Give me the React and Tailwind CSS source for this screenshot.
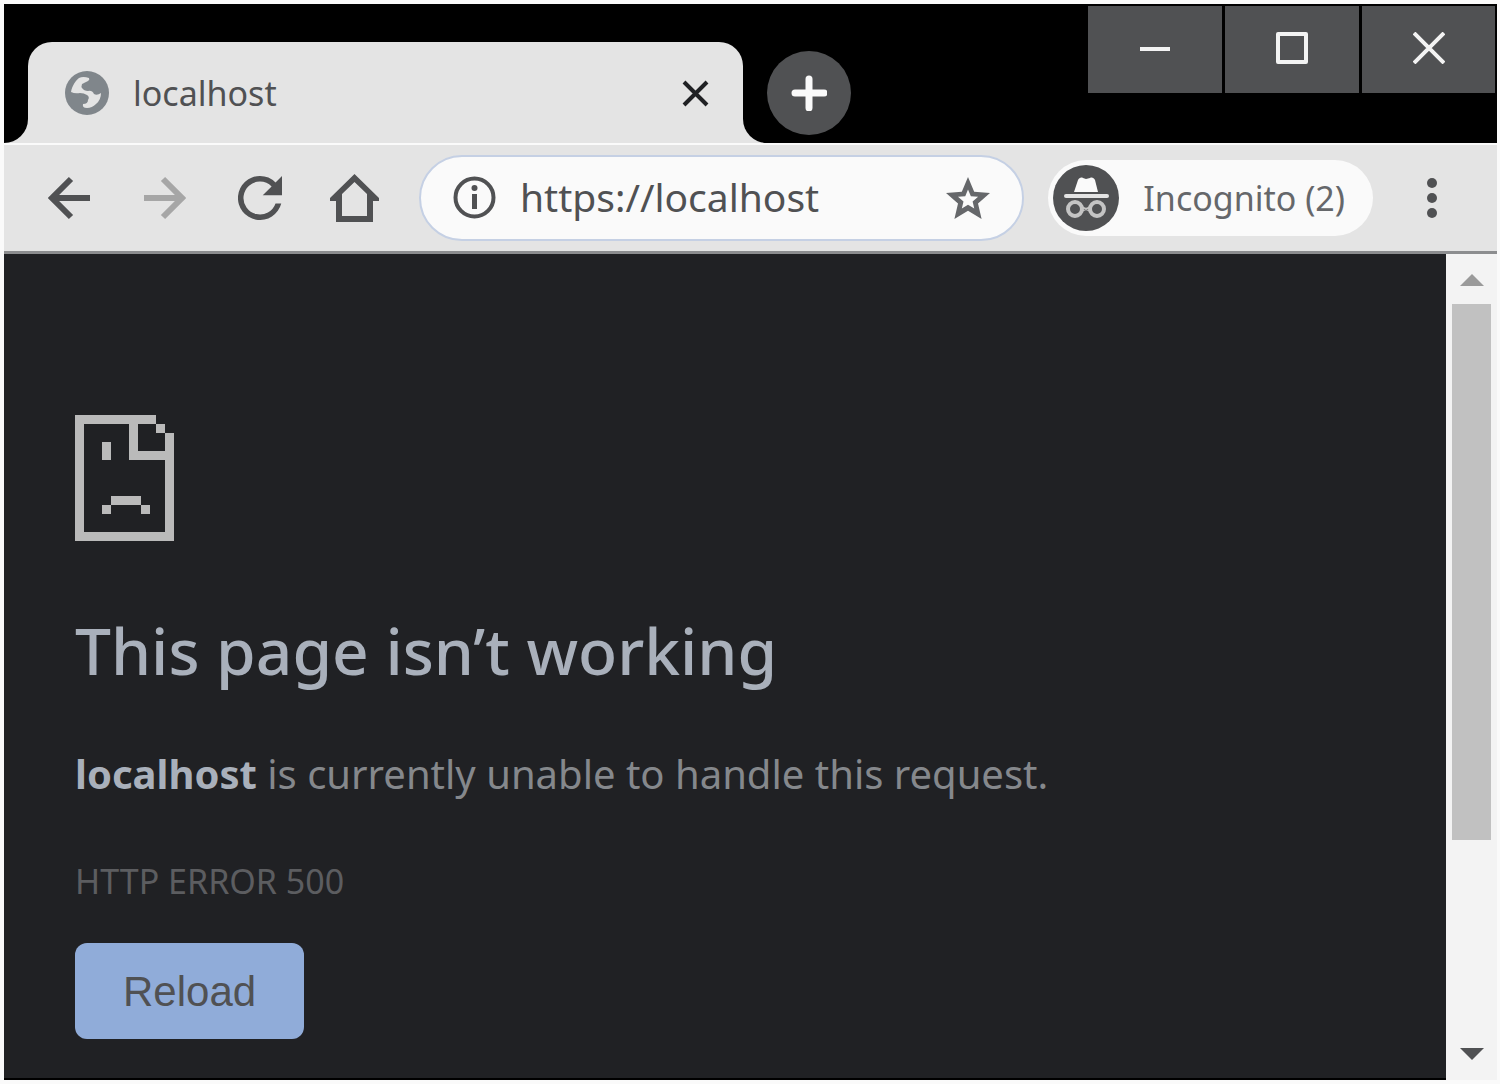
function GlobeIcon() {
  return (
    <svg className="size-11 shrink-0" viewBox="0 0 44 44" aria-hidden="true">
      <circle cx="22" cy="22" r="22" fill="#80868b" />
      <path
        d="M6 21C7 15 11 9 14 7q4-2 10 0 1 2-1 3l-6 3q-1 3 0 4 2 3 6 3 4-1 6 3 3 2 7-1 0 7-5 11-4 4-9 4-5 0-4-4 5 0 5-4 2-3-1-5-3-2-7-2-5 1-9-1z"
        fill="#e4e4e4"
      />
    </svg>
  );
}

function IncognitoIcon() {
  return (
    <svg className="size-[66px] shrink-0" viewBox="0 0 66 66" aria-hidden="true">
      <circle cx="33" cy="33" r="33" fill="#505153" />
      <path d="M21 27l4-12c1-2 3-3 5-2l3 1 4-1c2-1 4 0 5 2l3 12z" fill="#fafafa" />
      <path d="M13 31h41" stroke="#e4e4e4" strokeWidth="4" strokeLinecap="round" />
      <g fill="none" stroke="#c4c4c4" strokeWidth="4">
        <circle cx="22" cy="44" r="7" />
        <circle cx="44" cy="44" r="7" />
        <path d="M28 42l5 2 5-2M28 46l5-2 5 2" strokeWidth="2" />
      </g>
    </svg>
  );
}

function SadPageIcon() {
  return (
    <svg className="h-[126px] w-[99px]" viewBox="0 0 99 126" fill="#bababa" role="img" aria-label="Page error">
      <path d="M0 0h81v9H63v27h27V18h9v108H0zM9 9v108h81V45H54V9z" fillRule="evenodd" />
      <path d="M81 9h9v9h-9zM27 27h9v18h-9zM36 81h30v9H36zM27 90h9v9h-9zM66 90h9v9h-9z" />
    </svg>
  );
}

function TitleBar() {
  return (
    <header className="flex h-[139px] items-start bg-black">
      <div className="flex h-full shrink-0 items-end">
        <div className="size-6 bg-[#e4e4e4]">
          <div className="size-full rounded-br-3xl bg-black" />
        </div>
        <div className="flex h-[101px] w-[715px] items-center rounded-t-3xl bg-[#e4e4e4] pr-8 pl-[37px]">
          <GlobeIcon />
          <span className="ml-6 flex-1 text-[34px] leading-10 text-[#505153]">localhost</span>
          <button aria-label="Close tab" className="text-[#202124]">
            <svg className="size-8" viewBox="0 0 32 32" fill="none" stroke="currentColor" strokeWidth="4">
              <path d="M5 5l23 23M28 5L5 28" />
            </svg>
          </button>
        </div>
        <div className="size-6 bg-[#e4e4e4]">
          <div className="size-full rounded-bl-3xl bg-black" />
        </div>
      </div>
      <button
        aria-label="New tab"
        className="mt-[47px] flex size-[84px] shrink-0 items-center justify-center rounded-full bg-[#505153] text-[#fafafa]"
      >
        <svg className="size-9" viewBox="0 0 36 36" fill="none" stroke="currentColor" strokeWidth="7" strokeLinecap="round">
          <path d="M18 4v29M4 18h29" />
        </svg>
      </button>
      <div className="ml-auto flex shrink-0 gap-[3px] pt-[2px] pr-[2px] text-[#f3f3f3]">
        <button aria-label="Minimize" className="flex h-[87px] w-[134px] items-center justify-center bg-[#505153] pb-1">
          <svg className="size-8" viewBox="0 0 32 32" fill="none" stroke="currentColor" strokeWidth="4">
            <path d="M1 17h30" />
          </svg>
        </button>
        <button aria-label="Maximize" className="flex h-[87px] w-[134px] items-center justify-center bg-[#505153] pb-1">
          <svg className="size-8" viewBox="0 0 32 32" fill="none" stroke="currentColor" strokeWidth="4" strokeLinejoin="round">
            <path d="M2 2h28v28H2z" />
          </svg>
        </button>
        <button aria-label="Close" className="flex h-[87px] w-[133px] items-center justify-center bg-[#505153] pb-1">
          <svg className="size-8" viewBox="0 0 32 32" fill="none" stroke="currentColor" strokeWidth="4">
            <path d="M1 1l30 30M31 1L1 31" />
          </svg>
        </button>
      </div>
    </header>
  );
}

function Toolbar() {
  return (
    <nav className="flex h-[111px] items-center border-t-2 border-b-[3px] border-t-[#fafafa] border-b-[#8c8d8f] bg-[#e4e4e4] pr-[58px] pb-px pl-[43px] text-[#505153]">
      <button aria-label="Back">
        <svg className="size-11" viewBox="0 0 44 44" fill="none" stroke="currentColor" strokeWidth="6">
          <path d="M43 22H6M24 3L5 22l19 19" />
        </svg>
      </button>
      <button aria-label="Forward" className="ml-13 text-[#a6a6a6]">
        <svg className="size-11" viewBox="0 0 44 44" fill="none" stroke="currentColor" strokeWidth="6">
          <path d="M1 22h37M20 3l19 19-19 19" />
        </svg>
      </button>
      <button aria-label="Reload page" className="ml-[51px]">
        <svg className="size-11" viewBox="4 4 16 16" fill="currentColor">
          <path d="M17.650 6.350A7.960 7.960 0 0 0 12 4a8 8 0 1 0 7.730 10h-2.080A6 6 0 1 1 12 6c1.660 0 3.140.69 4.220 1.780L13 11h7V4z" />
        </svg>
      </button>
      <button aria-label="Home" className="ml-12">
        <svg className="h-12 w-[49px]" viewBox="0 0 49 48" fill="currentColor">
          <path d="M24.500 0L49 24v3h-6v21H6V27H0v-3zM24.500 8L12 20v22h25V20z" fillRule="evenodd" />
        </svg>
      </button>
      <label className="ml-10 flex h-[86px] min-w-0 flex-1 items-center rounded-full border-2 border-[#c5d0e4] bg-[#fafafa] pr-8 pl-8">
        <svg className="size-[43px] shrink-0" viewBox="0 0 43 43" aria-hidden="true">
          <circle cx="21.500" cy="21.500" r="19" fill="none" stroke="currentColor" strokeWidth="4" />
          <circle cx="21.500" cy="12" r="3" fill="currentColor" />
          <path d="M19 18h5v15h-5z" fill="currentColor" />
        </svg>
        <input
          type="text"
          aria-label="Address"
          defaultValue="https://localhost"
          className="ml-6 h-14 min-w-0 flex-1 bg-transparent text-[39px] outline-none"
        />
        <button aria-label="Bookmark this page" className="text-[#65676a]">
          <svg className="h-[42px] w-11" viewBox="2 2 20 19" fill="currentColor">
            <path
              d="M22 9.240l-7.190-.62L12 2 9.190 8.630 2 9.240l5.460 4.730L5.820 21 12 17.270 18.180 21l-1.630-7.030zM12 14.600l-2.800 1.700.75-3.200-2.500-2.150 3.300-.28L12 7.600l1.300 3.070 3.300.28-2.500 2.150.75 3.200z"
              fillRule="evenodd"
            />
          </svg>
        </button>
      </label>
      <button className="ml-6 flex h-19 shrink-0 items-center rounded-full bg-[#fafafa] pr-7 pl-[5px] text-[#65676a]">
        <IncognitoIcon />
        <span className="ml-6 text-[34px] leading-10">Incognito (2)</span>
      </button>
      <button aria-label="Menu" className="ml-13">
        <svg className="h-10 w-[14px]" viewBox="0 0 14 40" fill="currentColor">
          <circle cx="7" cy="5" r="5" />
          <circle cx="7" cy="20" r="5" />
          <circle cx="7" cy="35" r="5" />
        </svg>
      </button>
    </nav>
  );
}

function Scrollbar() {
  return (
    <div className="flex w-[51px] shrink-0 flex-col items-center bg-[#f3f3f3] pt-5 pb-5">
      <svg className="h-3 w-6 shrink-0" viewBox="0 0 24 12" fill="#9a9a9a" aria-hidden="true">
        <path d="M12 0l12 12H0z" />
      </svg>
      <div className="mt-[18px] flex w-full flex-1 flex-col items-center">
        <div className="h-[72%] w-[39px] bg-[#c1c1c1]" />
      </div>
      <svg className="h-3 w-6 shrink-0" viewBox="0 0 24 12" fill="#505153" aria-hidden="true">
        <path d="M0 0h24L12 12z" />
      </svg>
    </div>
  );
}

export default function App() {
  return (
    <div className="flex min-h-screen flex-col bg-[#fafafa] pt-1 pr-[3px] pb-1 pl-1 font-['Noto_Sans',sans-serif]">
      <TitleBar />
      <Toolbar />
      <div className="flex flex-1">
        <main className="flex-1 border-b-2 border-black bg-[#202124] px-[71px] pt-[161px] pb-9">
          <SadPageIcon />
          <h1 className="mt-[70px] text-[64px] leading-20 font-medium text-[#a9b0bb]">This page isn’t working</h1>
          <p className="mt-[55px] text-[40px] leading-14 text-[#85888c]">
            <strong className="font-bold text-[#a9b0bb]">localhost</strong> is currently unable to handle this request.
          </p>
          <p className="mt-[55px] text-[34px] leading-12 text-[#5c5d60]">HTTP ERROR 500</p>
          <button className="mt-[38px] h-24 rounded-xl bg-[#90acd9] px-12 font-['Liberation_Sans',sans-serif] text-[42px] text-[#505153]">
            Reload
          </button>
        </main>
        <Scrollbar />
      </div>
    </div>
  );
}
